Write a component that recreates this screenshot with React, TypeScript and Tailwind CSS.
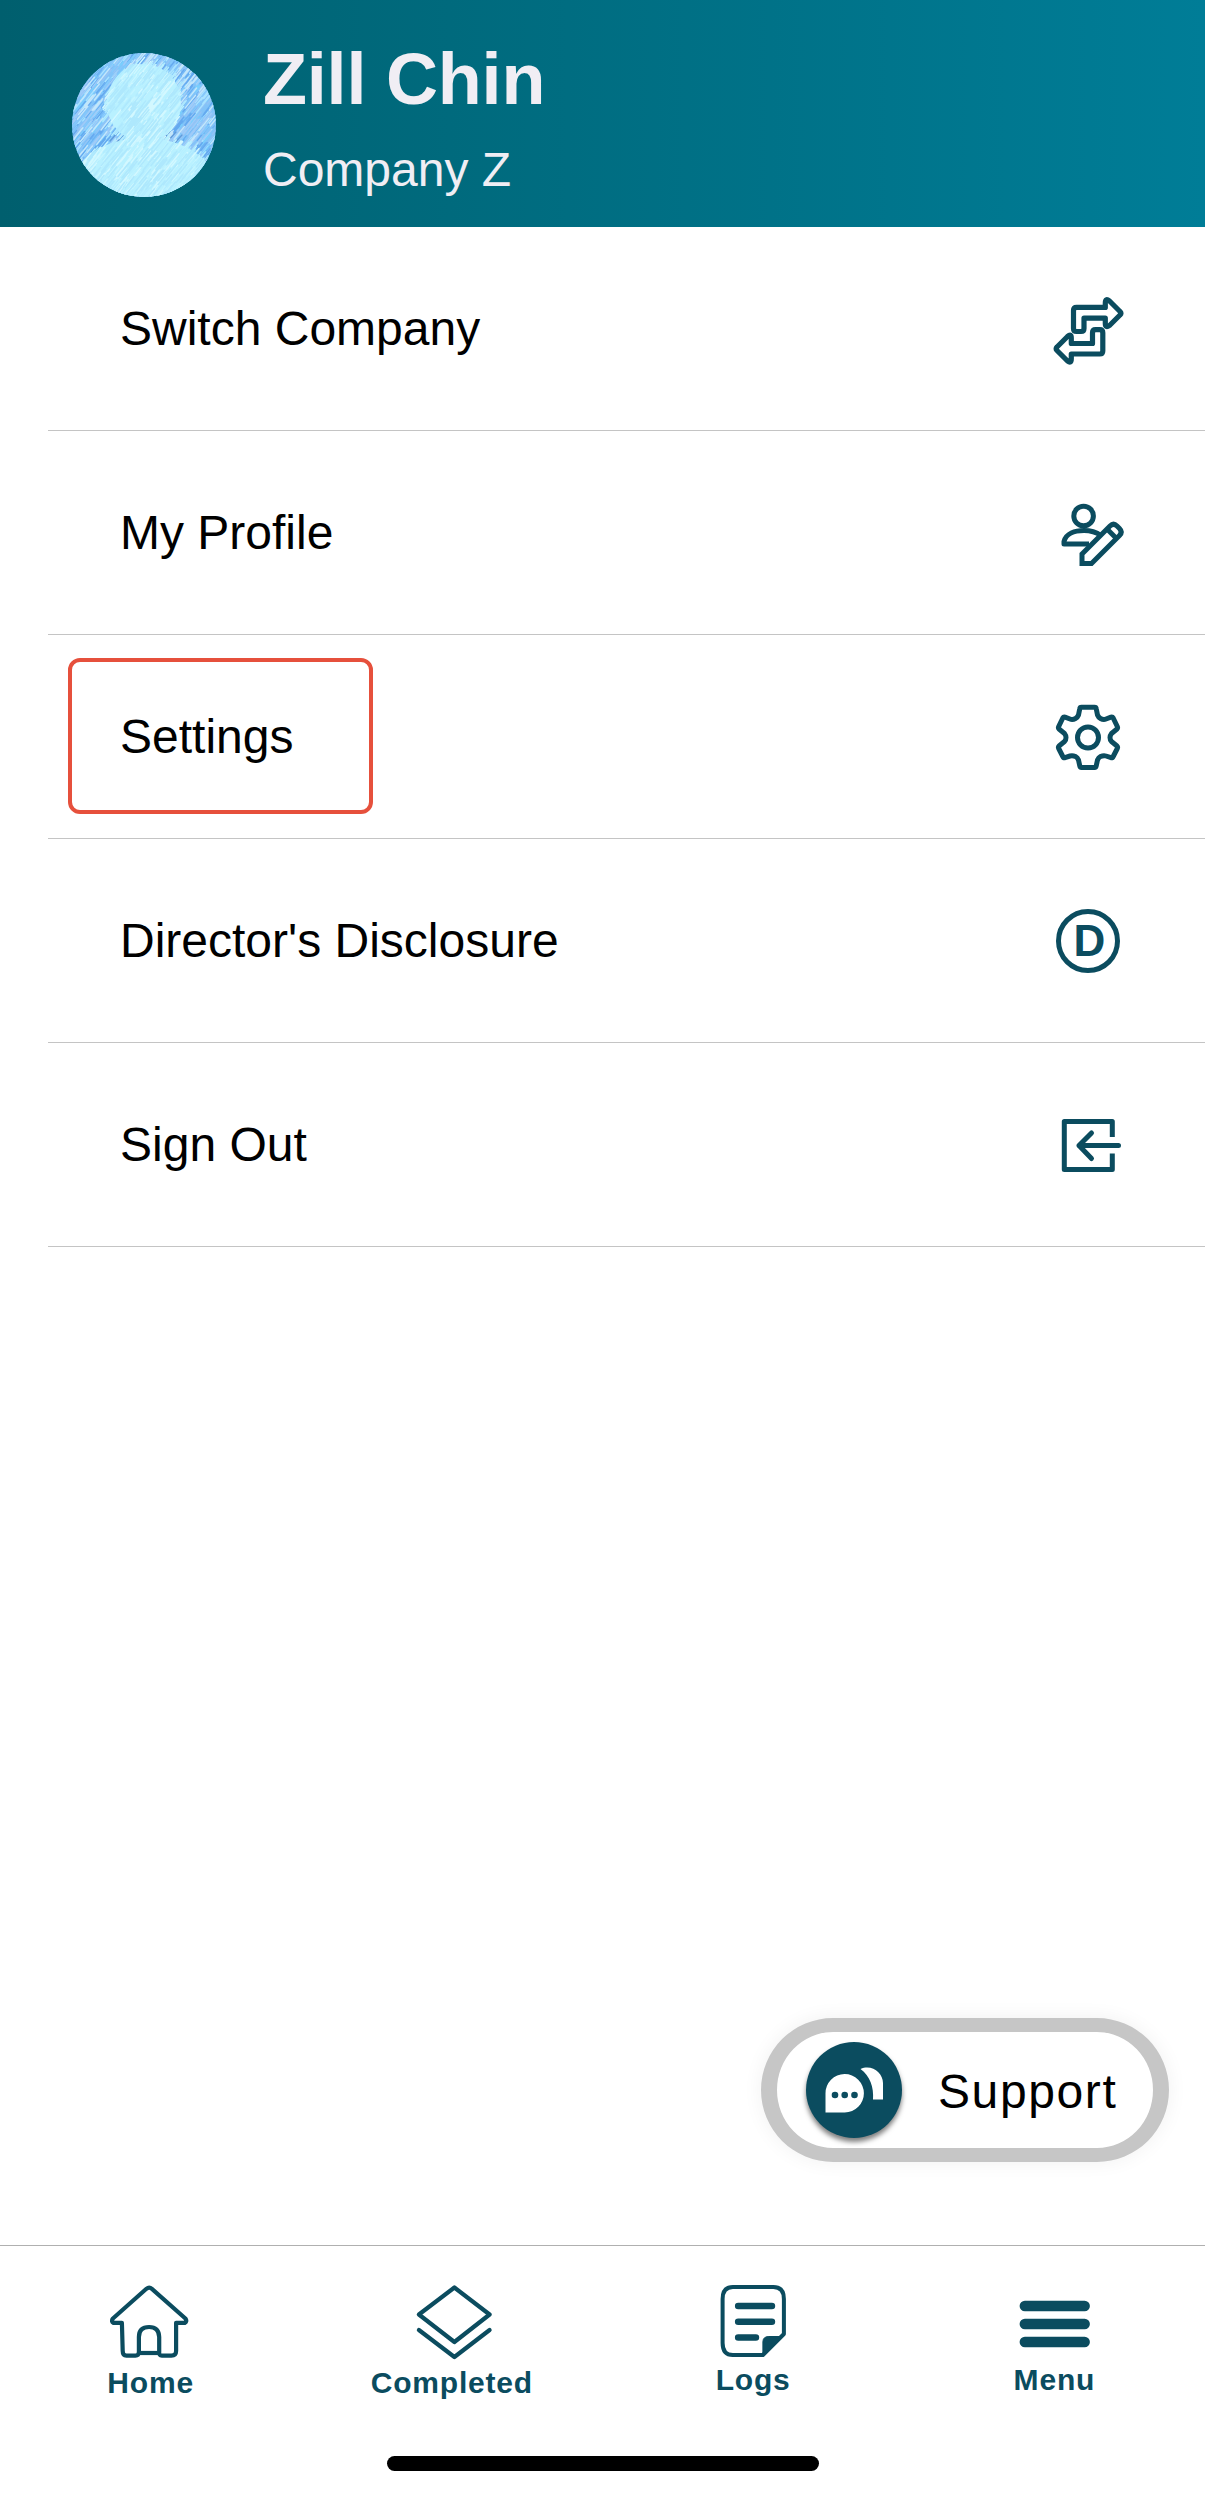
import type { ReactNode } from 'react';

const INK = '#0b4c5f';

const BLUES = ['#6bb2f4', '#78cffd', '#93c3f5', '#a8e2ff', '#64a9ef', '#84c8fc', '#9fcbf8', '#c3e6fb'];
const PALE = ['#c6f5ff', '#b2ecff', '#d3f8ff', '#b9f1ff', '#aee8fd'];

// small seeded generator so that the hatching is the same on every render
function makeRandom(start: number) {
  let seed = start;
  return () => {
    seed = (seed * 16807) % 2147483647;
    return seed / 2147483647;
  };
}

function inPerson(x: number, y: number) {
  const head = ((x - 72) / 37) ** 2 + ((y - 50) / 39) ** 2 < 1;
  const body = ((x - 72) / 73) ** 2 + ((y - 135) / 50) ** 2 < 1;
  return head || body;
}

function hatch(count: number, colors: string[], start: number, keep: (x: number, y: number) => boolean) {
  const random = makeRandom(start);
  const paths = colors.map(() => '');
  for (let i = 0; i < count; i++) {
    const x = random() * 144;
    const y = random() * 144;
    const len = 3 + random() * 5;
    if (!keep(x, y)) continue;
    paths[i % colors.length] += `M${(x - len * 0.8).toFixed(1)} ${(y + len).toFixed(1)}L${(x + len * 0.8).toFixed(1)} ${(y - len).toFixed(1)}`;
  }
  return paths;
}

const backHatch = hatch(1600, BLUES, 7, () => true);
const personHatch = hatch(1800, PALE, 91, inPerson);

function Avatar() {
  return (
    <svg viewBox="0 0 144 144" className="size-36 shrink-0" fill="none" strokeWidth="1.4" strokeLinecap="round">
      <defs>
        <clipPath id="avatar-circle">
          <circle cx="72" cy="72" r="72" />
        </clipPath>
      </defs>
      <g clipPath="url(#avatar-circle)">
        <rect width="144" height="144" fill="#82c3f8" />
        {backHatch.map((d, i) => (
          <path key={i} d={d} stroke={BLUES[i]} />
        ))}
        <path d="M38 88L46 79M44 90L53 81M50 92L60 81M89 90L98 78M94 90L104 79M100 93L110 82" stroke="#5f9bda" />
        <ellipse cx="72" cy="50" rx="37" ry="39" fill="#b9f1ff" />
        <ellipse cx="72" cy="135" rx="73" ry="50" fill="#b9f1ff" />
        {personHatch.map((d, i) => (
          <path key={i} d={d} stroke={PALE[i]} />
        ))}
      </g>
    </svg>
  );
}

function SwitchIcon() {
  return (
    <svg viewBox="1030 278.5 120 100" className="-mr-[10px] h-[100px] w-[120px]" fill="none" stroke={INK} strokeWidth="5.2" strokeLinejoin="round">
      <path d="M1076.5 306.900H1105.300V302.500Q1105.300 297 1109.500 300.500L1120 311Q1122 312.700 1120 314.500L1109.500 325Q1105.300 328 1105.300 323V317.700H1084V328Q1084 331 1081 331H1076.500Q1073.500 331 1073.500 328V309.900Q1073.500 306.900 1076.500 306.900Z" />
      <path d="M1099.800 353.500H1071.300V358.500Q1071.300 363.500 1067.500 360.500L1057 350Q1055.200 348.200 1057 346.500L1067.500 336Q1071.300 332.500 1071.300 337.500V343H1092.500V332.200Q1092.500 329.200 1095.500 329.200H1099.800Q1102.800 329.200 1102.800 332.200V350.500Q1102.800 353.500 1099.800 353.500Z" />
    </svg>
  );
}

function ProfileIcon() {
  return (
    <svg viewBox="1040 487.5 100 90" className="h-[90px] w-[100px]" fill="none" stroke={INK} strokeWidth="5" strokeLinejoin="round">
      <circle cx="1083.600" cy="515.500" r="9.800" />
      <path d="M1089 543.500H1064V541C1066 533 1075 530 1084 530C1091 530 1096 531.500 1101 535" />
      <path d="M1082 562.900V553.500L1110 525.500Q1113.500 522 1117 525.500L1119.500 528Q1123 531.500 1119.500 535L1091.500 562.900Z" strokeLinejoin="miter" />
      <path d="M1107 528.500L1116.500 538" />
    </svg>
  );
}

function SettingsIcon() {
  return (
    <svg viewBox="1040 686.5 100 100" className="size-[100px]" fill="none" stroke={INK} strokeWidth="5" strokeLinejoin="round">
      <circle cx="1088" cy="737" r="10.500" />
      <path d="M1081.500 706.700H1094.500Q1096 706.700 1096.200 708L1097.500 714.500Q1098.500 717 1100.500 718Q1103.500 719.600 1106 718.500L1111 716.600Q1112.500 716.200 1113.200 717.500L1117.300 726Q1118 727.500 1117 728.500L1111.500 733Q1110 735 1110 737Q1110 739.500 1111.500 741L1117 745.500Q1118 746.500 1117.300 748L1113.200 756Q1112.500 757.800 1111 757.200L1106 755.500Q1103.500 754.700 1100.500 756Q1098.500 757 1097.500 759.500L1096.200 765.500Q1096 767 1094.500 767H1081.500Q1080 767 1079.800 765.500L1078.500 759.500Q1077.500 757 1075.500 756Q1072.500 754.700 1070 755.500L1065 757.200Q1063.500 757.800 1062.800 756L1058.700 748Q1058 746.500 1059 745.500L1064.500 741Q1066 739.500 1066 737Q1066 735 1064.500 733L1059 728.500Q1058 727.500 1058.700 726L1062.800 717.500Q1063.500 716.200 1065 716.600L1070 718.500Q1072.500 719.600 1075.500 718Q1077.500 717 1078.500 714.500L1079.800 708Q1080 706.700 1081.500 706.700Z" />
    </svg>
  );
}

function DisclosureIcon() {
  return (
    <div className="mr-[20px] flex size-16 items-center justify-center rounded-full border-[5px] border-[#0b4c5f] text-[44px] leading-none font-bold text-[#0b4c5f]">
      <span className="pl-[3px]">D</span>
    </div>
  );
}

function SignOutIcon() {
  return (
    <svg viewBox="1040 1094.5 100 100" className="size-[100px]" fill="none" stroke={INK} strokeWidth="5" strokeLinejoin="round">
      <path d="M1112.300 1136.500V1121H1064.300V1169H1112.300V1153" />
      <path d="M1118.500 1145H1079M1091.500 1132.500L1079 1145L1091.500 1158" strokeLinecap="round" />
    </svg>
  );
}

function HomeIcon() {
  return (
    <svg viewBox="109.6 2284 82 76" className="h-[76px] w-[82px]" fill="none" stroke={INK} strokeWidth="4.200" strokeLinejoin="round">
      <path d="M146 2288.800Q148.800 2286.500 151.500 2288.800L185 2318.500Q187 2321.500 184.500 2322.800H175.700V2351Q175.700 2355.600 171 2355.600H161.500Q158.500 2355.500 158.800 2352V2337Q158.500 2327 148.700 2327Q138.500 2327 138.500 2337V2352Q138.500 2355.600 135 2355.600H126Q122.300 2355.600 122.300 2351L121.500 2322.800H113Q110.500 2321.500 112.500 2318.500Z" />
      <path d="M138.500 2353H158.800" />
    </svg>
  );
}

function CompletedIcon() {
  return (
    <svg viewBox="410.9 2284 82 76" className="h-[76px] w-[82px]" fill="none" stroke={INK} strokeWidth="4.200" strokeLinejoin="round" strokeLinecap="round">
      <path d="M454.300 2287.500L489.500 2314.500L454.300 2342L418.800 2314.500Z" />
      <path d="M418.800 2330L454.300 2357L489.500 2330" />
    </svg>
  );
}

function LogsIcon() {
  return (
    <svg viewBox="712.1 2284 82 73" className="h-[73px] w-[82px]" fill="none" stroke={INK} strokeWidth="4" strokeLinejoin="round">
      <path d="M733 2287H773.500Q784 2287 784 2299V2334L763 2355H733Q722.700 2355 722.700 2343V2299Q722.700 2287 733 2287Z" />
      <path d="M763 2355V2342Q763 2336.500 769 2336.500H782.500Z" fill={INK} strokeWidth="1" />
      <path d="M738.300 2306H772M738.300 2321.700H772M738.300 2337.500H756" strokeWidth="6.600" strokeLinecap="round" />
    </svg>
  );
}

function MenuIcon() {
  return (
    <svg viewBox="1013.4 2284 82 73" className="h-[73px] w-[82px]" stroke={INK} strokeWidth="10.600" strokeLinecap="round">
      <path d="M1025.300 2306H1085M1025.300 2324H1085M1025.300 2342H1085" />
    </svg>
  );
}

function SupportIcon() {
  return (
    <svg viewBox="806 2042 96 96" className="size-24 rounded-full bg-[#0b4c5f] shadow-[0_4px_5px_rgba(0,0,0,0.5)]" fill="#fff">
      <path d="M825.500 2112.500V2093.500A19.200 19.200 0 1 1 844.700 2112.500Z" />
      <path d="M860.500 2069C872 2064 883 2073 883 2083V2099.500H873C874 2087 870 2076 860.500 2069Z" />
      <g fill={INK}>
        <circle cx="835" cy="2095" r="3.300" />
        <circle cx="844.700" cy="2095" r="3.300" />
        <circle cx="854.500" cy="2095" r="3.300" />
      </g>
    </svg>
  );
}

interface MenuRowProps {
  label: string;
  icon: ReactNode;
  highlighted?: boolean;
}

function MenuRow({ label, icon, highlighted }: MenuRowProps) {
  return (
    <li className="relative ml-12 flex h-51 items-center justify-between border-b border-[#c4c4c4] pr-[65px] pl-[72px]">
      {highlighted && <span className="absolute top-[23px] left-5 h-[156px] w-[305px] rounded-xl border-4 border-[#e6503c]" />}
      <span className="text-[48px] leading-none">{label}</span>
      {icon}
    </li>
  );
}

interface TabProps {
  label: string;
  icon: ReactNode;
}

function Tab({ label, icon }: TabProps) {
  return (
    <button className="flex flex-col items-center gap-[5px] text-[30px] leading-9 font-bold tracking-[0.8px] text-[#0b4c5f]">
      {icon}
      {label}
    </button>
  );
}

export default function App() {
  return (
    <div className="relative flex h-[2495px] w-[1205px] flex-col bg-white font-['Liberation_Sans',sans-serif] text-black">
      <header className="flex h-[227px] items-start bg-linear-to-r from-[#005f6e] to-[#007d97] pt-[53px] pl-[72px] text-[#f0eef4]">
        <Avatar />
        <div className="-mt-[10px] ml-[47px]">
          <h1 className="text-[72px] leading-[72px] font-bold tracking-[-0.2px]">Zill Chin</h1>
          <p className="mt-[31px] text-[48px] leading-[48px]">Company Z</p>
        </div>
      </header>

      <ul>
        <MenuRow label="Switch Company" icon={<SwitchIcon />} />
        <MenuRow label="My Profile" icon={<ProfileIcon />} />
        <MenuRow label="Settings" icon={<SettingsIcon />} highlighted />
        <MenuRow label="Director's Disclosure" icon={<DisclosureIcon />} />
        <MenuRow label="Sign Out" icon={<SignOutIcon />} />
      </ul>

      <button className="absolute top-[2018px] left-[761px] flex h-36 w-[408px] items-center rounded-[72px] border-x-[16px] border-y-[14px] border-[#c6c6c6] bg-white pl-[29px] shadow-[0_0_20px_rgba(0,0,0,0.06)]">
        <SupportIcon />
        <span className="ml-[36px] pt-[3px] text-[48px] tracking-[1.6px]">Support</span>
      </button>

      <nav className="mt-auto flex h-[250px] flex-col items-center border-t border-[#b0b0b0]">
        <div className="grid w-full grid-cols-4 pt-[38px]">
          <Tab label="Home" icon={<HomeIcon />} />
          <Tab label="Completed" icon={<CompletedIcon />} />
          <Tab label="Logs" icon={<LogsIcon />} />
          <Tab label="Menu" icon={<MenuIcon />} />
        </div>
        <div className="mt-auto mb-6 h-[15px] w-[432px] rounded-full bg-black" />
      </nav>
    </div>
  );
}
